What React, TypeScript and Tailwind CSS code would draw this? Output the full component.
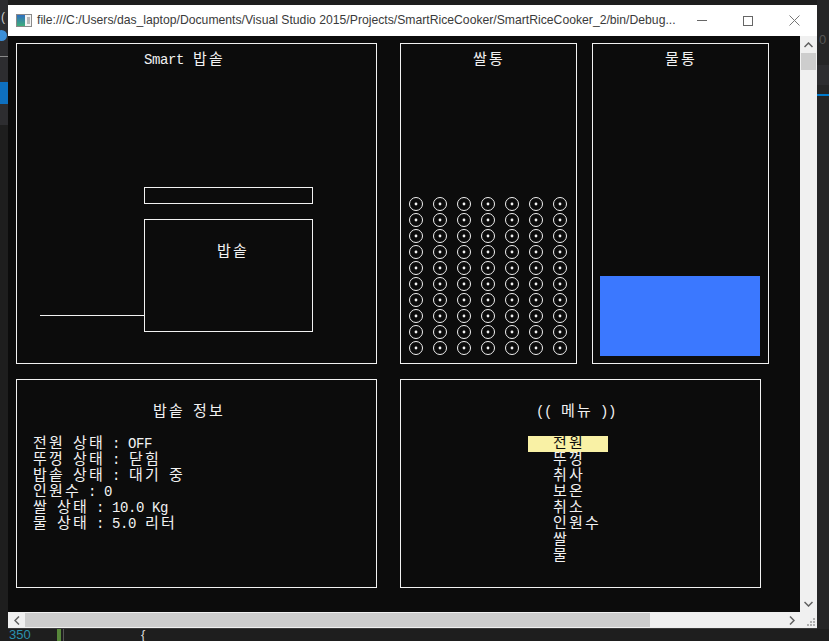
import React from 'react';

// console cell helper: half-width chars take 8px, hangul takes 16px
function isWide(ch: string) {
  return ch.charCodeAt(0) > 0x2000;
}

function Line({ text, className = '' }: { text: string; className?: string }) {
  return (
    <div className={`flex h-[16px] items-center leading-[16px] whitespace-pre ${className}`}>
      {Array.from(text).map((ch, i) => (
        <span
          key={i}
          className={isWide(ch) ? 'inline-block w-[16px] text-center text-[15px] translate-y-[1px]' : 'inline-block w-[8px] text-center text-[14px]'}
        >
          {ch}
        </span>
      ))}
    </div>
  );
}

function Grain() {
  return (
    <svg width="16" height="16" viewBox="0 0 16 16">
      <circle cx="8" cy="8" r="6.5" fill="none" stroke="#f2f2f2" strokeWidth="1" />
      <circle cx="8" cy="8" r="1.4" fill="#f2f2f2" />
    </svg>
  );
}

function ConsoleIcon() {
  return (
    <svg width="16" height="13" viewBox="0 0 16 13">
      <defs>
        <linearGradient id="ci" x1="0" y1="0" x2="0" y2="1">
          <stop offset="0" stopColor="#2f6fc0" />
          <stop offset="1" stopColor="#3fae7a" />
        </linearGradient>
      </defs>
      <rect x="0.5" y="0.5" width="15" height="12" fill="#f4f4f4" stroke="#8a8a8a" />
      <rect x="1" y="1" width="8" height="11" fill="url(#ci)" />
      <rect x="11" y="3" width="3" height="7" fill="#b8b8b8" />
    </svg>
  );
}

const statusLines = [
  '전원 상태 : OFF',
  '뚜껑 상태 : 닫힘',
  '밥솥 상태 : 대기 중',
  '인원수 : 0',
  '쌀 상태 : 10.0 Kg',
  '물 상태 : 5.0 리터',
];

const menuItems = ['전원', '뚜껑', '취사', '보온', '취소', '인원수', '쌀', '물'];

export default function App() {
  return (
    <div className="relative w-[829px] h-[641px] overflow-hidden bg-[#1e1e1e] font-['Liberation_Sans',sans-serif]">
      {/* Visual Studio peeking out behind the console window */}
      <div className="absolute left-0 top-0 w-[8px] h-[641px] overflow-hidden bg-[#2d2d30]">
        <div className="absolute left-[1px] top-[8px] text-[12px] text-[#cfcfcf]">(</div>
        <div className="absolute left-[-4px] top-[30px] w-[11px] h-[11px] rounded-full bg-[#3c8fd8]" />
        <div className="absolute left-0 top-[56px] w-[8px] h-px bg-[#8a8a8a]" />
        <div className="absolute left-0 top-[82px] w-[8px] h-[22px] bg-[#0e70c0]" />
        <div className="absolute left-0 top-[125px] w-[8px] h-[516px] bg-[#1e1e1e]" />
      </div>
      <div className="absolute right-0 top-0 w-[12px] h-[641px] overflow-hidden bg-[#252526]">
        <div className="absolute left-[2px] top-[30px] text-[13px] text-[#555]">0</div>
        <div className="absolute left-0 top-[65px] w-[12px] h-[20px] bg-[#2d2d30]" />
        <div className="absolute left-0 top-[94px] w-[12px] h-[2px] bg-[#007acc]" />
      </div>
      <div className="absolute left-0 bottom-0 w-[829px] h-[12px] bg-[#1e1e1e]">
        <div className="absolute left-[9px] top-[-1px] text-[13px] text-[#2b91af] leading-[14px]">350</div>
        <div className="absolute left-[57px] top-0 w-[4px] h-[12px] bg-[#57873a]" />
        <div className="absolute left-[63px] top-0 w-px h-[12px] bg-[#555]" />
        <div className="absolute left-[141px] top-[-1px] text-[13px] text-[#dcdcdc] leading-[14px]">{'{'}</div>
      </div>

      {/* console window */}
      <div className="relative ml-[8px] mt-[5px] w-[809px] flex flex-col bg-white border-b border-[#3a3a3a]">
        {/* title bar */}
        <div className="h-[31px] flex items-center bg-white">
          <div className="ml-[8px] flex items-center">
            <ConsoleIcon />
          </div>
          <div className="ml-[5px] flex-1 text-[12.2px] text-[#3a3a3a] whitespace-nowrap">
            file:///C:/Users/das_laptop/Documents/Visual Studio 2015/Projects/SmartRiceCooker/SmartRiceCooker_2/bin/Debug...
          </div>
          <div className="flex h-full">
            <div className="w-[46px] flex items-center justify-center">
              <div className="w-[10px] h-px bg-[#666]" />
            </div>
            <div className="w-[46px] flex items-center justify-center">
              <div className="w-[10px] h-[10px] border border-[#666]" />
            </div>
            <div className="w-[46px] flex items-center justify-center">
              <svg width="11" height="11" viewBox="0 0 11 11">
                <path d="M0.5 0.5 L10.5 10.5 M10.5 0.5 L0.5 10.5" stroke="#777" strokeWidth="1" />
              </svg>
            </div>
          </div>
        </div>

        <div className="flex">
          {/* console body */}
          <div className="w-[792px] h-[576px] bg-[#0c0c0c] pl-[8px] pt-[7px] text-[#f2f2f2] font-['Liberation_Mono','Noto_Sans_CJK_KR',monospace]">
            <div className="flex">
              {/* Smart 밥솥 */}
              <div className="w-[361px] h-[321px] border border-[#f2f2f2]">
                <Line text="Smart 밥솥" className="mt-[8px] pl-[127px]" />
                <div className="mt-[119px] ml-[127px] w-[169px] h-[17px] border border-[#f2f2f2]" />
                <div className="mt-[15px] ml-[23px] flex items-start">
                  <div className="mt-[96px] w-[104px] h-px bg-[#f2f2f2]" />
                  <div className="w-[169px] h-[113px] border border-[#f2f2f2]">
                    <Line text="밥솥" className="mt-[24px] pl-[71px]" />
                  </div>
                </div>
              </div>

              {/* 쌀통 */}
              <div className="ml-[23px] w-[177px] h-[321px] border border-[#f2f2f2]">
                <Line text="쌀통" className="mt-[8px] pl-[71px]" />
                <div className="mt-[128px] pl-[7px] flex flex-col">
                  {Array.from({ length: 10 }).map((_, r) => (
                    <div key={r} className="flex gap-[8px] h-[16px]">
                      {Array.from({ length: 7 }).map((_, c) => (
                        <Grain key={c} />
                      ))}
                    </div>
                  ))}
                </div>
              </div>

              {/* 물통 */}
              <div className="ml-[15px] w-[177px] h-[321px] border border-[#f2f2f2]">
                <Line text="물통" className="mt-[8px] pl-[71px]" />
                <div className="mt-[208px] ml-[7px] w-[160px] h-[80px] bg-[#3b78ff]" />
              </div>
            </div>

            <div className="mt-[15px] flex">
              {/* 밥솥 정보 */}
              <div className="w-[361px] h-[209px] border border-[#f2f2f2]">
                <Line text="밥솥 정보" className="mt-[24px] pl-[135px]" />
                <div className="mt-[16px] pl-[15px]">
                  {statusLines.map((t) => (
                    <Line key={t} text={t} />
                  ))}
                </div>
              </div>

              {/* 메뉴 */}
              <div className="ml-[23px] w-[361px] h-[209px] border border-[#f2f2f2]">
                <Line text="(( 메뉴 ))" className="mt-[24px] pl-[135px]" />
                <div className="mt-[16px]">
                  {menuItems.map((m, i) =>
                    i === 0 ? (
                      <Line key={m} text={m} className="ml-[127px] w-[80px] pl-[24px] bg-[#f9f1a5] text-[#0c0c0c]" />
                    ) : (
                      <Line key={m} text={m} className="pl-[151px]" />
                    )
                  )}
                </div>
              </div>
            </div>
          </div>

          {/* vertical scrollbar */}
          <div className="w-[17px] h-[576px] bg-[#f0f0f0] flex flex-col items-center">
            <div className="h-[17px] flex items-center justify-center">
              <svg width="9" height="6" viewBox="0 0 9 6">
                <path d="M0.5 5 L4.5 1 L8.5 5" fill="none" stroke="#606060" strokeWidth="1.5" />
              </svg>
            </div>
            <div className="w-[15px] h-[17px] bg-[#cdcdcd]" />
            <div className="flex-1" />
            <div className="h-[17px] flex items-center justify-center">
              <svg width="9" height="6" viewBox="0 0 9 6">
                <path d="M0.5 1 L4.5 5 L8.5 1" fill="none" stroke="#606060" strokeWidth="1.5" />
              </svg>
            </div>
          </div>
        </div>

        {/* horizontal scrollbar */}
        <div className="h-[16px] flex bg-[#f0f0f0]">
          <div className="w-[17px] flex items-center justify-center">
            <svg width="6" height="9" viewBox="0 0 6 9">
              <path d="M5 0.5 L1 4.5 L5 8.5" fill="none" stroke="#606060" strokeWidth="1.5" />
            </svg>
          </div>
          <div className="my-[1px] w-[625px] bg-[#cdcdcd]" />
          <div className="flex-1" />
          <div className="w-[17px] flex items-center justify-center">
            <svg width="6" height="9" viewBox="0 0 6 9">
              <path d="M1 0.5 L5 4.5 L1 8.5" fill="none" stroke="#606060" strokeWidth="1.5" />
            </svg>
          </div>
          <div className="w-[17px] flex items-end justify-end pr-[2px] pb-[2px]">
            <svg width="8" height="8" viewBox="0 0 8 8">
              <rect x="6" y="0" width="2" height="2" fill="#b0b0b0" />
              <rect x="3" y="3" width="2" height="2" fill="#b0b0b0" />
              <rect x="6" y="3" width="2" height="2" fill="#b0b0b0" />
              <rect x="0" y="6" width="2" height="2" fill="#b0b0b0" />
              <rect x="3" y="6" width="2" height="2" fill="#b0b0b0" />
              <rect x="6" y="6" width="2" height="2" fill="#b0b0b0" />
            </svg>
          </div>
        </div>
      </div>
    </div>
  );
}
